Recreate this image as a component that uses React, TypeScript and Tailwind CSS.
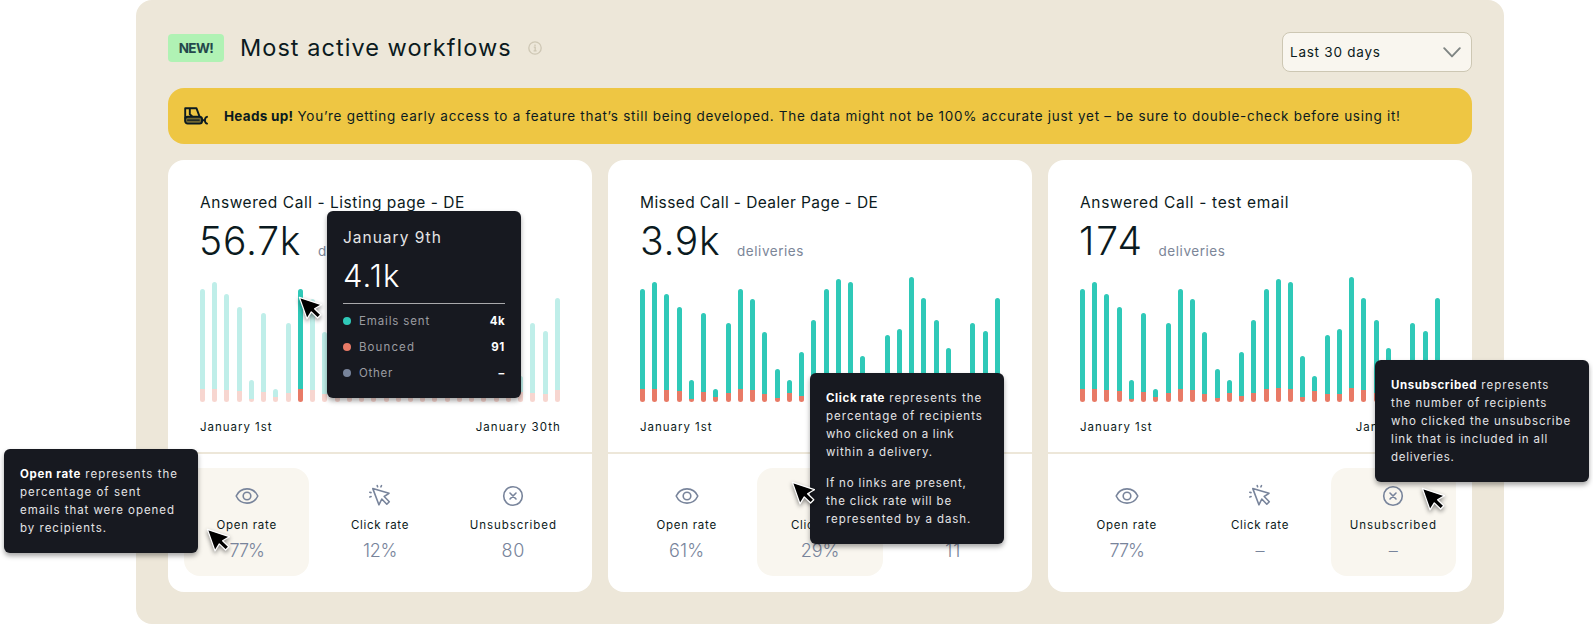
import type { ReactNode } from "react";

const heights = [
  113.3, 119.6, 108, 95.3, 21.6, 89.3, 12.7, 78.6, 113.3, 102.6, 69.7, 32.7, 21.6, 50, 82, 113.3, 123.3, 119.6, 46.3, 26, 66.7, 73,
  125, 104.3, 82, 54.3, 26, 78.6, 70.6, 104.3,
];
const bounced = [
  12.7, 13, 12.3, 10.7, 2.7, 10, 5, 8.7, 12.7, 11.7, 8, 4, 9, 5.7, 9.3, 12.7, 14, 13, 5.3, 10.7, 7.7, 8.3, 14, 11.7, 9.3, 6.3,
  10.3, 8.7, 8, 12,
];

function Bars({ highlight }: { highlight?: number }) {
  return (
    <div className="mt-[9px] flex h-[126px] items-end justify-between">
      {heights.map((h, i) => (
        <div
          key={i}
          className={`flex w-[5px] flex-col overflow-hidden rounded-full ${
            highlight !== undefined && highlight !== i ? "opacity-30" : ""
          }`}
          style={{ height: h }}
        >
          <div className="flex-1 bg-[#2fc9b8]" />
          <div className="bg-[#e87a66]" style={{ height: bounced[i] }} />
        </div>
      ))}
    </div>
  );
}

function EyeIcon() {
  return (
    <svg className="size-6" viewBox="0 0 24 24" fill="none" stroke="#78849b" strokeWidth="1.6" strokeLinejoin="round">
      <path d="M1.2 12C3.4 7.2 7.4 4.9 12 4.9s8.6 2.3 10.8 7.1c-2.2 4.8-6.2 7.1-10.8 7.1S3.4 16.8 1.2 12z" />
      <circle cx="12" cy="12" r="3.8" />
    </svg>
  );
}

function ClickIcon() {
  return (
    <svg
      className="size-6"
      viewBox="0 0 24 24"
      fill="none"
      stroke="#78849b"
      strokeWidth="1.6"
      strokeLinejoin="round"
      strokeLinecap="round"
    >
      <path d="M4.8 4.6 21 9.3l-4.8 3.2 5.1 5.2-2.5 2.5-5-5.2-2.9 5.8z" />
      <path d="M9.2 1.6l.4 1.2M13.5 1.6l-.6 1.2M1.8 8.3l1.2.3M1.8 13l1.3-.5" />
    </svg>
  );
}

function CrossIcon() {
  return (
    <svg className="size-6" viewBox="0 0 24 24" fill="none" stroke="#78849b" strokeWidth="1.6" strokeLinecap="round">
      <circle cx="12" cy="12" r="9.3" />
      <path d="M9 9l6 6M15 9l-6 6" />
    </svg>
  );
}

function BulldozerIcon() {
  return (
    <svg className="h-[18px] w-6" viewBox="0 0 24 18" fill="none" stroke="#0b1a20" strokeWidth="1.9" strokeLinejoin="round" strokeLinecap="round">
      <path d="M1.2 11V1.2h11.2l3 8M5.8 1.2v6l2.2 2" />
      <rect x="1.1" y="9.7" width="17" height="6.9" rx="2.6" fill="#0b1a20" fillOpacity="0.55" />
      <path d="M3.6 13.1h11.6" strokeWidth="1.3" />
      <path d="M18 13.2h2.6M23 9.8c-2.8.9-2.8 5.9 0 6.8" />
    </svg>
  );
}

function Cursor({ className }: { className: string }) {
  return (
    <svg
      className={`absolute h-7 w-7 drop-shadow-[0_2px_2px_rgba(0,0,0,0.45)] ${className}`}
      viewBox="0 0 28 28"
      fill="#000"
      stroke="#fff"
      strokeWidth="1.3"
      strokeLinejoin="round"
    >
      <path d="M2.4 2.4 24.4 9.7l-6.8 4 6.2 6.1-3.2 3.2-6.3-6.1-4.3 7z" />
    </svg>
  );
}

function Tooltip({ className, children }: { className: string; children: ReactNode }) {
  return (
    <div
      className={`absolute rounded-md bg-[#171920] p-4 text-[11.5px] leading-[18px] whitespace-nowrap text-[#e4e4e6] shadow-[0_3px_5px_rgba(0,0,0,0.35)] ${className}`}
    >
      {children}
    </div>
  );
}

type Stat = { icon: ReactNode; label: string; spacing: string; value: string; valueSpacing: string };

const stats = (open: [string, string], click: [string, string], unsub: [string, string]): Stat[] => [
  { icon: <EyeIcon />, label: "Open rate", spacing: "tracking-[0.75px]", value: open[0], valueSpacing: open[1] },
  { icon: <ClickIcon />, label: "Click rate", spacing: "tracking-[0.7px]", value: click[0], valueSpacing: click[1] },
  { icon: <CrossIcon />, label: "Unsubscribed", spacing: "tracking-[0.94px]", value: unsub[0], valueSpacing: unsub[1] },
];

const cards = [
  {
    title: "Answered Call - Listing page - DE",
    spacing: "tracking-[0.54px]",
    total: "56.7k",
    totalClass: "w-[119px] -ml-px tracking-[0.8px]",
    highlight: 8,
    active: 0,
    stats: stats(["77%", "tracking-[-1px]"], ["12%", "tracking-[-0.3px]"], ["80", "tracking-[0.8px]"]),
  },
  {
    title: "Missed Call - Dealer Page - DE",
    spacing: "tracking-[0.41px]",
    total: "3.9k",
    totalClass: "w-[97px] tracking-[0.68px]",
    highlight: undefined,
    active: 1,
    stats: stats(["61%", "tracking-[0.1px]"], ["29%", "tracking-[-0.1px]"], ["11", "tracking-[0.9px]"]),
  },
  {
    title: "Answered Call - test email",
    spacing: "tracking-[0.67px]",
    total: "174",
    totalClass: "w-[79.5px] -ml-px tracking-[1.8px]",
    highlight: undefined,
    active: 2,
    stats: stats(["77%", "tracking-[-1px]"], ["–", ""], ["–", ""]),
  },
];

function Card({ card }: { card: (typeof cards)[number] }) {
  return (
    <section className="flex h-[432px] flex-col rounded-2xl bg-white">
      <div className="px-8 pt-8">
        <h2 className={`text-[15.5px] leading-[22px] whitespace-nowrap ${card.spacing}`}>{card.title}</h2>
        <div className="flex h-[53px] items-center">
          <span className={`text-[39px] leading-[53px] font-light ${card.totalClass}`}>{card.total}</span>
          <span className="mt-[21px] text-[13.5px] leading-5 tracking-[0.55px] text-[#7c8698]">deliveries</span>
        </div>
        <Bars highlight={card.highlight} />
        <div className="mt-4 flex justify-between text-[11.5px] leading-[18px]">
          <span className="tracking-[0.97px]">January 1st</span>
          <span className="-mr-px tracking-[1.08px]">January 30th</span>
        </div>
      </div>
      <div className="mt-4 grid grid-cols-3 gap-2 border-t-2 border-[#ede7d9] px-4 pt-[14px] pb-4">
        {card.stats.map((s, i) => (
          <div
            key={s.label}
            className={`flex h-[108px] flex-col items-center rounded-2xl pt-4 ${i === card.active ? "bg-[#f9f6ef]" : ""}`}
          >
            {s.icon}
            <span className={`mt-2 text-[11.5px] leading-[18px] whitespace-nowrap ${s.spacing}`}>{s.label}</span>
            <span className={`mt-[5px] text-[18px] leading-6 font-light text-[#78849b] ${s.valueSpacing}`}>{s.value}</span>
          </div>
        ))}
      </div>
    </section>
  );
}

function LegendRow({ dot, label, spacing, value, valueSpacing }: { dot: string; label: string; spacing: string; value: string; valueSpacing: string }) {
  return (
    <div className="flex items-center gap-2">
      <span className={`size-2 rounded-full ${dot}`} />
      <span className={`flex-1 text-[#9b9ca1] ${spacing}`}>{label}</span>
      <span className={`font-bold text-white ${valueSpacing}`}>{value}</span>
    </div>
  );
}

export default function App() {
  return (
    <div className="relative h-[624px] w-[1593px] overflow-hidden bg-white pl-[136px] font-['Inter',sans-serif] text-[#0b1a20]">
      <main className="h-[624px] w-[1368px] rounded-2xl bg-[#ede7d9] px-8 pt-8">
        <header className="flex h-10 justify-between">
          <div className="flex h-8 items-center">
            <span className="flex h-7 w-14 items-center justify-center rounded bg-[#b0f2b4] text-[13.5px] font-bold tracking-[-0.6px] text-[#24474b]">
              NEW!
            </span>
            <h1 className="ml-4 w-[288px] text-[23.5px] leading-8 tracking-[1.04px] whitespace-nowrap">Most active workflows</h1>
            <svg className="size-[14px]" viewBox="0 0 14 14" fill="none" stroke="#cec7b4" strokeWidth="1.3">
              <circle cx="7" cy="7" r="6.2" />
              <path d="M5.8 6.2h1.4v3.6M5.6 9.8h3M7 3.6v1.3" />
            </svg>
          </div>
          <div className="flex h-10 w-[190px] items-center justify-between rounded-lg border border-[#cdc7b3] bg-[#f9f6ef] pr-[10px] pl-[7px] text-[13.5px]">
            <span className="tracking-[0.76px]">Last 30 days</span>
            <svg className="h-[11px] w-[18px]" viewBox="0 0 18 11" fill="none" stroke="#7f8583" strokeWidth="1.9" strokeLinecap="round" strokeLinejoin="round">
              <path d="M1.2 1.2 9 9.4l7.8-8.2" />
            </svg>
          </div>
        </header>

        <div className="mt-4 flex h-14 items-center rounded-2xl bg-[#eec643] pl-4 text-[13.5px] whitespace-nowrap">
          <BulldozerIcon />
          <span className="ml-4 w-[73.5px] font-bold tracking-[0.27px]">Heads up!</span>
          <span className="tracking-[0.72px]">
            You’re getting early access to a feature that’s still being developed. The data might not be 100% accurate just yet – be
            sure to double-check before using it!
          </span>
        </div>

        <div className="mt-4 grid grid-cols-3 gap-4">
          {cards.map((c) => (
            <Card key={c.title} card={c} />
          ))}
        </div>
      </main>

      <Tooltip className="top-[211px] left-[327px] h-[187px] w-[194px]">
        <div className="text-[15.5px] leading-[21px] tracking-[1px]">January 9th</div>
        <div className="h-[56px] border-b border-[#a9a9ac] text-[31px] leading-[55px] font-light tracking-[1.09px] text-white">4.1k</div>
        <div className="mt-2 flex w-[162px] flex-col gap-2">
          <LegendRow dot="bg-[#2fc9b8]" label="Emails sent" spacing="tracking-[0.85px]" value="4k" valueSpacing="tracking-[0.4px]" />
          <LegendRow dot="bg-[#e87a66]" label="Bounced" spacing="tracking-[1.1px]" value="91" valueSpacing="tracking-[0.7px]" />
          <LegendRow dot="bg-[#78849b]" label="Other" spacing="tracking-[0.73px]" value="–" valueSpacing="tracking-[0.7px]" />
        </div>
      </Tooltip>

      <Tooltip className="top-[373px] left-[810px] h-[171px] w-[194px]">
        <p>
          <b className="mr-px tracking-[0.6px] text-white">Click rate</b> <span className="tracking-[1.03px]">represents the</span>
          <br />
          <span className="tracking-[1px]">percentage of recipients</span>
          <br />
          <span className="tracking-[0.71px]">who clicked on a link</span>
          <br />
          <span className="tracking-[0.87px]">within a delivery.</span>
        </p>
        <p className="mt-[13px]">
          <span className="tracking-[0.84px]">If no links are present,</span>
          <br />
          <span className="tracking-[0.82px]">the click rate will be</span>
          <br />
          <span className="tracking-[0.93px]">represented by a dash.</span>
        </p>
      </Tooltip>

      <Tooltip className="top-[360px] left-[1375px] h-[122px] w-[214px]">
        <p>
          <b className="mr-px tracking-[0.6px] text-white">Unsubscribed</b> <span className="tracking-[1.01px]">represents</span>
          <br />
          <span className="tracking-[0.97px]">the number of recipients</span>
          <br />
          <span className="tracking-[0.9px]">who clicked the unsubscribe</span>
          <br />
          <span className="tracking-[0.88px]">link that is included in all</span>
          <br />
          <span className="tracking-[0.72px]">deliveries.</span>
        </p>
      </Tooltip>

      <Tooltip className="top-[449px] left-1 h-[104px] w-[194px]">
        <p>
          <b className="mr-px tracking-[0.67px] text-white">Open rate</b> <span className="tracking-[1.01px]">represents the</span>
          <br />
          <span className="tracking-[1.02px]">percentage of sent</span>
          <br />
          <span className="tracking-[0.94px]">emails that were opened</span>
          <br />
          <span className="tracking-[1px]">by recipients.</span>
        </p>
      </Tooltip>

      <Cursor className="top-[294.5px] left-[297px]" />
      <Cursor className="top-[526.5px] left-[205px]" />
      <Cursor className="top-[479.5px] left-[789.5px]" />
      <Cursor className="top-[485.5px] left-[1419.5px]" />
    </div>
  );
}
